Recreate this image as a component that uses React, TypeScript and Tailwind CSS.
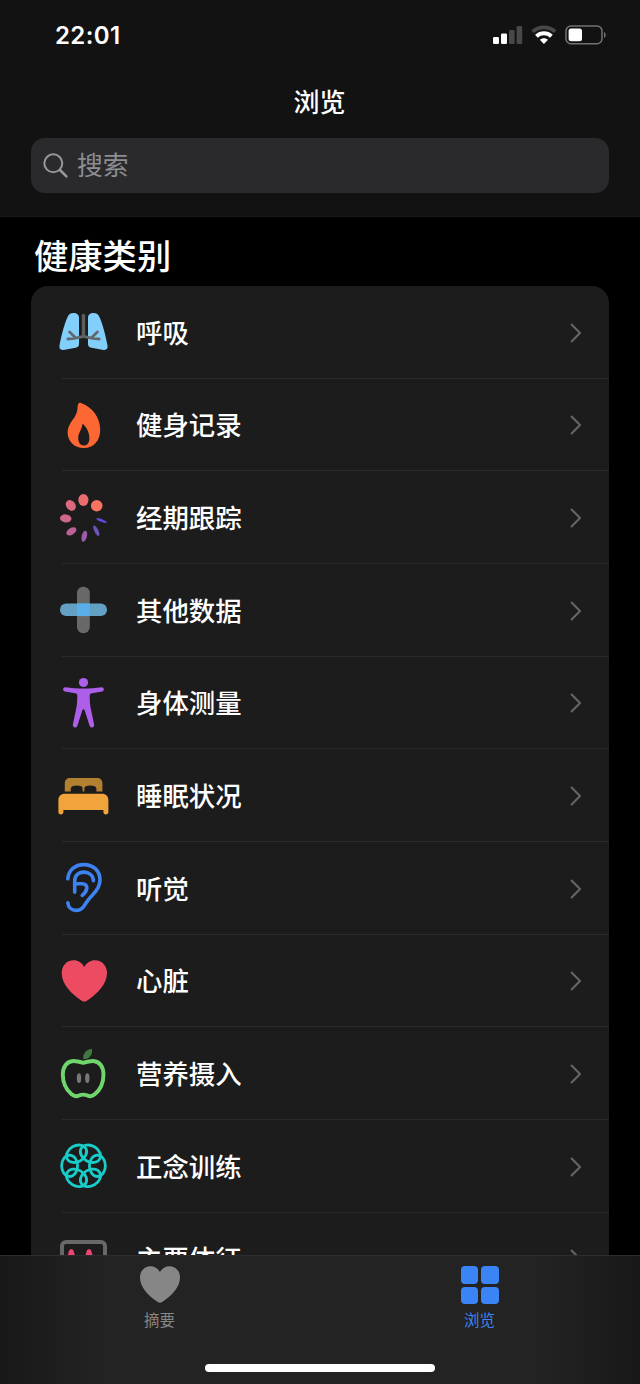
import type { ReactNode } from "react";

const HEART =
  "M29.3 14 C31.6 9.6 35.6 7.3 40 7.3 C47 7.3 52 12.8 52 20 C52 31.5 42 40.8 32.2 47.6 C31 48.4 30.2 48.8 29.3 48.8 C28.4 48.8 27.6 48.4 26.4 47.6 C16.6 40.8 6.7 31.5 6.7 20 C6.7 12.8 11.7 7.3 18.6 7.3 C23 7.3 27 9.6 29.3 14 Z";

const dots = [
  { cx: 41.7, cy: 15.7, rx: 5.8, ry: 5.7, rot: 0, fill: "#f87461" },
  { cx: 28.4, cy: 10, rx: 5.1, ry: 5.9, rot: 0, fill: "#ea6c6e" },
  { cx: 15.8, cy: 15.4, rx: 4.6, ry: 5.8, rot: -40, fill: "#dd6a7c" },
  { cx: 10.7, cy: 28.4, rx: 5.8, ry: 4, rot: 6, fill: "#cf668c" },
  { cx: 16.4, cy: 41.4, rx: 5.6, ry: 3.3, rot: -32, fill: "#bb6198" },
  { cx: 29.3, cy: 46.2, rx: 2.6, ry: 5.7, rot: 14, fill: "#9a5cab" },
  { cx: 41.3, cy: 40.7, rx: 2, ry: 5.7, rot: -26, fill: "#6b55b8" },
  { cx: 46.6, cy: 30.5, rx: 5.6, ry: 1.4, rot: 22, fill: "#5a4bd8" },
];

const rings = [0, 60, 120, 180, 240, 300];

const lungs = (
  <>
    <path
      fill="#83cffb"
      d="M18.5 9 C21.8 9 24 10.8 24 13.8 V39.5 C24 42 23 43.3 20.5 43.8 L8.5 45.9 C5.5 46.3 3.9 44.8 4.5 41.6 C6 33 9 21 12.3 13.4 C13.5 10.5 15.5 9 18.5 9 Z"
    />
    <path
      fill="#83cffb"
      d="M38.5 9 C35.2 9 33 10.8 33 13.8 V39.5 C33 42 34 43.3 36.5 43.8 L48.5 45.9 C51.5 46.3 53.1 44.8 52.5 41.6 C51 33 48 21 44.7 13.4 C43.5 10.5 41.5 9 38.5 9 Z"
    />
    <path
      fill="none"
      stroke="#61696e"
      strokeWidth="2.8"
      strokeLinecap="round"
      d="M12.8 35 C17.5 34.8 23 34 28.5 32.4 C34 34 39.5 34.8 44.2 35 M14.6 28 L20.3 33.4 M42.4 28 L36.7 33.4"
    />
    <path stroke="#5d5d5d" strokeWidth="3.4" strokeLinecap="round" d="M28.5 11.4 V31.8" />
  </>
);

const flame = (
  <path
    fill="#fd6733"
    fillRule="evenodd"
    d="M23.6 6.2 C24.1 5.5 24.9 5.5 25.9 5.9 C37.5 10 45.2 20.3 45.2 32.8 C45.2 43.9 38.6 51.1 28.8 51.1 C19.2 51.1 12.6 44.4 12.6 35.3 C12.6 25.4 22.5 20.6 22.5 11.2 C22.5 9.2 22.9 7.3 23.6 6.2 Z M27.4 27.4 C26.8 32.5 23.2 36 23.2 41 C23.2 45.5 25.4 48.4 28.8 48.4 C32.3 48.4 34.4 45.7 34.4 41.4 C34.4 35.4 31.6 30.3 28.2 27.3 C27.8 27 27.5 27 27.4 27.4 Z"
  />
);

const cycle = (
  <>
    {dots.map((d) => (
      <ellipse
        key={d.fill}
        cx={d.cx}
        cy={d.cy}
        rx={d.rx}
        ry={d.ry}
        fill={d.fill}
        transform={`rotate(${d.rot} ${d.cx} ${d.cy})`}
      />
    ))}
  </>
);

const plus = (
  <>
    <rect x="22" y="4.8" width="12.8" height="46.4" rx="6.2" fill="#686868" />
    <rect x="5" y="21.5" width="47" height="12.6" rx="6.2" fill="#63a1c4" />
    <rect x="22" y="21.5" width="12.8" height="12.6" fill="#5aafea" />
  </>
);

const body = (
  <>
    <circle cx="28.5" cy="7.5" r="4.6" fill="#ae5fea" />
    <path
      fill="#ae5fea"
      d="M10.6 12.2 C16 13 22 13.6 28.5 13.6 C35 13.6 41 13 46.4 12.2 C49.2 11.9 49.8 15.8 47.2 16.4 L37 18.3 C35.2 18.6 34.7 19.3 34.7 21 C34.7 26 35 31 36.2 35.5 L39.1 49.6 C39.6 52.8 35.6 53.8 34.6 50.8 L29.7 35.4 C29.2 33.8 27.8 33.8 27.3 35.4 L22.4 50.8 C21.4 53.8 17.4 52.8 17.9 49.6 L20.8 35.5 C22 31 22.3 26 22.3 21 C22.3 19.3 21.8 18.6 20 18.3 L9.8 16.4 C7.2 15.8 7.8 11.9 10.6 12.2 Z"
    />
  </>
);

const bed = (
  <>
    <path
      fill="#b37f30"
      d="M9.8 23.4 V15.6 C9.8 12 11.8 10.1 15.4 10.1 H41.8 C45.4 10.1 47.4 12 47.4 15.6 V23.4 H41.4 V21 C41.4 19.3 40.6 18.6 39 18.1 C36.4 17.3 34 17.3 31.5 18.1 C29.9 18.6 29.4 19.5 29.4 21 V23.4 H27.6 V21 C27.6 19.5 27.2 18.6 25.6 18.1 C23 17.3 20.8 17.3 18.2 18.1 C16.6 18.6 15.8 19.3 15.8 21 V23.4 Z"
    />
    <path
      fill="#f1a43b"
      d="M3.4 32.4 C3.4 28 5.7 25.7 10.2 25.7 H46.6 C51.1 25.7 53.4 28 53.4 32.4 V44 C53.4 45.6 52.4 46.5 50.9 46.5 C49.4 46.5 48.4 45.6 48.4 44 V41.9 H8.4 V44 C8.4 45.6 7.4 46.5 5.9 46.5 C4.4 46.5 3.4 45.6 3.4 44 Z"
    />
  </>
);

const ear = (
  <path
    fill="none"
    stroke="#3d82f1"
    strokeWidth="3.6"
    strokeLinecap="round"
    strokeLinejoin="round"
    d="M12.8 18.8 C13.5 10.2 20.2 4.6 28.8 4.6 C38.6 4.6 45 11 45 19.8 C45 26 42 30.6 37.5 35 C32.5 40 31.6 42.3 28.9 46.2 C26.8 49.2 24.2 50.4 21.2 50.4 C16.6 50.4 13.2 47.2 12.9 42.8 M19.7 32.2 V21 C19.7 15.6 23.4 12.1 28.8 12.1 C34.4 12.1 38.2 15.5 38.4 20.8 M19.7 23.8 H27 C30.2 23.8 32 25.4 31.8 28 C31.6 30.6 29.6 33.4 27.2 35.4"
  />
);

const heart = <path fill="#ec4b62" d={HEART} />;

const apple = (
  <>
    <path
      fill="none"
      stroke="#6fd56c"
      strokeWidth="3.9"
      strokeLinejoin="round"
      d="M28.2 16.9 C24.5 15.8 21.5 14.9 18.2 15 C11.8 15.3 7.8 20.8 7.8 28.4 C7.8 36.4 11.6 44 16.6 48.3 C19.2 50.5 21.4 50.8 24 49.6 C26.8 48.3 29.6 48.3 32.4 49.6 C35 50.8 37.2 50.5 39.8 48.3 C44.8 44 48.5 36.4 48.5 28.4 C48.5 20.8 44.6 15.3 38.2 15 C34.9 14.9 31.9 15.8 28.2 16.9 Z"
    />
    <path fill="#44763f" d="M36.8 2.8 C38.2 8.4 34.4 13.4 28.4 13.3 C27.2 8.2 30.8 3.6 36.8 2.8 Z" />
    <ellipse cx="24" cy="32.2" rx="2.2" ry="4.9" fill="#777" />
    <ellipse cx="32.3" cy="32.2" rx="2.2" ry="4.9" fill="#777" />
  </>
);

const mindful = (
  <>
    {rings.map((angle) => (
      <ellipse
        key={angle}
        cx="42.4"
        cy="27.8"
        rx="8"
        ry="10.7"
        fill="none"
        stroke="#18ccc9"
        strokeWidth="2.8"
        transform={`rotate(${angle} 28.5 27.8)`}
      />
    ))}
  </>
);

const vitals = (
  <>
    <rect x="7" y="11" width="43" height="36" rx="4" fill="none" stroke="#686868" strokeWidth="4" />
    <path
      fill="none"
      stroke="#f0456f"
      strokeWidth="4.6"
      strokeLinejoin="round"
      strokeLinecap="round"
      d="M12.5 33 L16.3 20.5 L20 33 L25.2 40 L30.3 33 L34 20.5 L37.8 33 L44 36"
    />
  </>
);

const categories: { label: string; icon: ReactNode }[] = [
  { label: "呼吸", icon: lungs },
  { label: "健身记录", icon: flame },
  { label: "经期跟踪", icon: cycle },
  { label: "其他数据", icon: plus },
  { label: "身体测量", icon: body },
  { label: "睡眠状况", icon: bed },
  { label: "听觉", icon: ear },
  { label: "心脏", icon: heart },
  { label: "营养摄入", icon: apple },
  { label: "正念训练", icon: mindful },
  { label: "主要体征", icon: vitals },
];

function StatusBar() {
  return (
    <div className="flex h-[70px] items-center justify-between pl-[55px] pr-[33px]">
      <span className="pt-0.5 font-['Inter',sans-serif] text-[24px] font-semibold leading-none tracking-[0.4px]">
        22:01
      </span>
      <svg width="115" height="22" viewBox="0 0 115 22">
        {/* Signal */}
        <rect x="1" y="13" width="6" height="7" rx="1.3" fill="#fff" />
        <rect x="9" y="9.5" width="6" height="10.5" rx="1.3" fill="#fff" />
        <rect x="17" y="6" width="5.6" height="14" rx="1.3" fill="#484848" />
        <rect x="24.6" y="2" width="5.6" height="18" rx="1.3" fill="#484848" />
        {/* Wi-Fi */}
        <path fill="none" stroke="#484848" strokeWidth="3.6" d="M40.5 7.6 C47 1.9 57 1.9 63.2 7.6" />
        <path fill="none" stroke="#fff" strokeWidth="4" d="M44.4 12.2 C48.8 8.3 55.2 8.3 59.4 12.2" />
        <path fill="#fff" d="M47.8 15.8 C50 13.7 53.8 13.7 56 15.8 L51.9 20 Z" />
        {/* Battery */}
        <rect x="74" y="2" width="36" height="17.8" rx="5" fill="none" stroke="#727272" strokeWidth="1.5" />
        <rect x="76.6" y="4.5" width="13.4" height="12.8" rx="2.5" fill="#fff" />
        <path fill="#727272" d="M112 8 C114.2 9 114.2 13 112 14 Z" />
      </svg>
    </div>
  );
}

function SearchField() {
  return (
    <div className="mx-[31px] flex h-[55px] items-center rounded-[14px] bg-[#2a2a2c] pl-3">
      <svg width="26" height="26" viewBox="0 0 26 26" fill="none" stroke="#98989b" strokeLinecap="round">
        <circle cx="10.3" cy="10.3" r="9" strokeWidth="2" />
        <path d="M17 17 L23.4 23.4" strokeWidth="2.6" />
      </svg>
      <span className="ml-2 pb-[3px] text-[25.8px] leading-none text-[#8d8d92]">搜索</span>
    </div>
  );
}

function Chevron() {
  return (
    <svg width="12" height="20" viewBox="0 0 12 20" fill="none" stroke="#656568" className="mt-0.5">
      <path d="M1.6 1.6 L10 10 L1.6 18.4" strokeWidth="2.1" strokeLinecap="round" strokeLinejoin="round" />
    </svg>
  );
}

function TabBar() {
  return (
    <nav className="flex h-[129px] shrink-0 flex-col border-t border-[#2d2d2d] bg-[linear-gradient(90deg,#181818,#232323_16%,#232323_84%,#181818)]">
      <div className="flex h-[108px]">
        <div className="flex flex-1 flex-col items-center pr-px pt-[10px] text-[#868686]">
          <svg width="40" height="37" viewBox="6.7 7.3 45.3 41.5" fill="currentColor">
            <path d={HEART} />
          </svg>
          <span className="mt-[7px] text-[15.5px] leading-[18px]">摘要</span>
        </div>
        <div className="flex flex-1 flex-col items-center pr-px pt-[10px] text-[#3b84f6]">
          <div className="grid h-[38px] w-[38px] grid-cols-2 gap-[3px]">
            <div className="rounded-[4px] bg-[#3b84f6]" />
            <div className="rounded-[4px] bg-[#3b84f6]" />
            <div className="rounded-[4px] bg-[#3b84f6]" />
            <div className="rounded-[4px] bg-[#3b84f6]" />
          </div>
          <span className="mt-1.5 text-[15.5px] leading-[18px]">浏览</span>
        </div>
      </div>
      <div className="mx-auto h-2 w-[230px] rounded-full bg-white" />
    </nav>
  );
}

export default function App() {
  return (
    <div className="flex h-[1384px] w-[640px] flex-col overflow-hidden bg-black font-['Noto_Sans_CJK_SC',sans-serif] text-white">
      <header className="h-[217px] shrink-0 border-b border-[#1a1a1a] bg-[#121212]">
        <StatusBar />
        <h1 className="flex h-[68px] items-center justify-center pb-1.5 pr-px text-[26px] font-medium leading-none">
          浏览
        </h1>
        <SearchField />
      </header>

      <main className="min-h-0 flex-1 overflow-hidden">
        <h2 className="flex h-[69px] items-center pl-[34px] pt-[5px] text-[34.3px] font-medium leading-none">健康类别</h2>
        <div className="mx-[31px] rounded-t-[17px] bg-[#1c1c1c]">
          {categories.map((c) => (
            <div key={c.label} className="flex h-[92.67px] pl-6">
              <div className="flex w-[7px] items-center">
                <svg width="56" height="56" viewBox="0 0 56 56" className="shrink-0">
                  {c.icon}
                </svg>
              </div>
              <div className="flex flex-1 items-center justify-between border-b border-[#2b2b2b] pl-[74px] pr-[27px]">
                <span className="text-[26.4px] font-medium leading-none">{c.label}</span>
                <Chevron />
              </div>
            </div>
          ))}
        </div>
      </main>

      <TabBar />
    </div>
  );
}
